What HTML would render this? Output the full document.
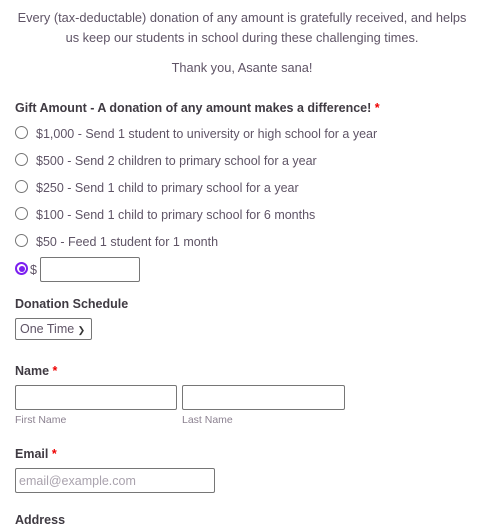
<!DOCTYPE html>
<html><head><style>
*{margin:0;padding:0;box-sizing:border-box}
body{width:504px;height:527px;background:#fff;font-family:"Liberation Sans",sans-serif;color:#5f5466;position:relative;overflow:hidden}
.a{position:absolute;white-space:nowrap}
.c{left:0;width:484px;text-align:center;font-size:12.8px}
.b{font-weight:bold;color:#3f3a42;font-size:12.5px}
.r{color:#e00}
.o{font-size:12.5px;left:36px}
.rad{position:absolute;left:15px;width:13px;height:13px;border:1px solid #767676;border-radius:50%;background:#fff}
.box{position:absolute;border:1px solid #767676;border-radius:2px;background:#fff}
.s{font-size:10.5px;color:#8b8190}
</style></head><body>
<div class="a c" style="top:10px">Every (tax-deductable) donation of any amount is gratefully received, and helps</div>
<div class="a c" style="top:30px">us keep our students in school during these challenging times.</div>
<div class="a c" style="top:60px">Thank you, Asante sana!</div>
<div class="a b" style="left:15px;top:101px">Gift Amount - A donation of any amount makes a difference! <span class="r">*</span></div>
<div class="rad" style="top:126px"></div><div class="a o" style="top:127px">$1,000 - Send 1 student to university or high school for a year</div>
<div class="rad" style="top:153px"></div><div class="a o" style="top:154px">$500 - Send 2 children to primary school for a year</div>
<div class="rad" style="top:180px"></div><div class="a o" style="top:181px">$250 - Send 1 child to primary school for a year</div>
<div class="rad" style="top:207px"></div><div class="a o" style="top:208px">$100 - Send 1 child to primary school for 6 months</div>
<div class="rad" style="top:234px"></div><div class="a o" style="top:235px">$50 - Feed 1 student for 1 month</div>
<div class="rad" style="top:262px;border:2px solid #7c1ff0;"><div style="position:absolute;left:1.5px;top:1.5px;width:6px;height:6px;border-radius:50%;background:#7c1ff0"></div></div>
<div class="a" style="left:30px;top:263px;font-size:12.5px">$</div>
<div class="box" style="left:40px;top:257px;width:100px;height:25px"></div>
<div class="a b" style="left:15px;top:297px">Donation Schedule</div>
<div class="box" style="left:15px;top:318px;width:77px;height:22px;font-size:12.5px;padding:3px 0 0 4px">One Time <span style="font-size:9px;color:#333">&#10095;</span></div>
<div class="a b" style="left:15px;top:364px">Name <span class="r">*</span></div>
<div class="box" style="left:15px;top:385px;width:162px;height:25px"></div>
<div class="box" style="left:182px;top:385px;width:163px;height:25px"></div>
<div class="a s" style="left:15px;top:414px">First Name</div>
<div class="a s" style="left:182px;top:414px">Last Name</div>
<div class="a b" style="left:15px;top:447px">Email <span class="r">*</span></div>
<div class="box" style="left:15px;top:468px;width:200px;height:25px;font-size:12.5px;color:#a9a2ad;padding:5px 0 0 3px">email@example.com</div>
<div class="a b" style="left:15px;top:513px">Address</div>
</body></html>
